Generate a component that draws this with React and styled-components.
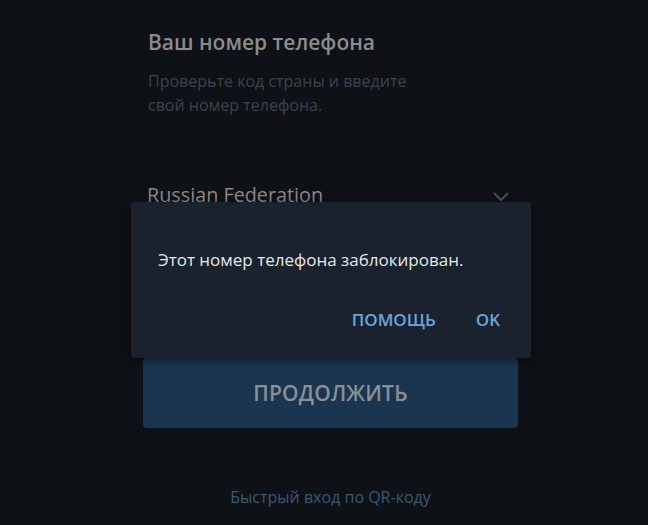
import React from "react";
import styled, { createGlobalStyle } from "styled-components";

const GlobalStyle = createGlobalStyle`
  html, body {
    margin: 0;
    padding: 0;
    background: #0e1116;
  }
  body {
    font-family: "Open Sans", "Noto Sans", sans-serif;
  }
`;

const Page = styled.div`
  position: relative;
  width: 648px;
  height: 525px;
  overflow: hidden;
  background: #0e1116;
`;

const Column = styled.div`
  width: 375px;
  margin-left: 143px;
  display: flex;
  flex-direction: column;
`;

const Title = styled.div`
  padding: 27px 0 0 5px;
  font-size: 21px;
  font-weight: 600;
  line-height: 30px;
  color: #8c8c8c;
`;

const Subtitle = styled.div`
  padding: 12px 0 0 5px;
  width: 290px;
  font-size: 16px;
  line-height: 24px;
  color: #3c434c;
`;

const CountryRow = styled.div`
  margin-top: 62px;
  display: flex;
  align-items: center;
  justify-content: space-between;
  padding: 0 8px 0 4px;
  height: 30px;
  font-size: 19.8px;
  color: #8a8a8a;
`;

const Chevron = styled.svg`
  width: 18px;
  height: 12px;
  margin-top: 6px;
`;

const PhoneRow = styled.div`
  margin-top: 20px;
  height: 129px;
  border-top: 1px solid #1d2530;
  box-sizing: border-box;
`;

const ContinueButton = styled.button`
  height: 70px;
  border: none;
  border-radius: 4px;
  background: #19354f;
  color: #8a9096;
  font-family: inherit;
  font-size: 21px;
  font-weight: 600;
  letter-spacing: 0.2px;
  cursor: pointer;
`;

const QrLink = styled.div`
  margin-top: 58px;
  text-align: center;
  font-size: 16px;
  line-height: 22px;
  color: #3b5875;
`;

const Dialog = styled.div`
  position: absolute;
  left: 131px;
  top: 202px;
  width: 400px;
  height: 156px;
  box-sizing: border-box;
  background: #1a222d;
  border-radius: 3px;
  box-shadow: 0 2px 10px rgba(0, 0, 0, 0.45);
  display: flex;
  flex-direction: column;
  padding: 46px 0 0 27px;
`;

const DialogText = styled.div`
  font-size: 17px;
  line-height: 24px;
  color: #e6e8ea;
`;

const DialogActions = styled.div`
  margin-top: 36px;
  display: flex;
  justify-content: flex-end;
  gap: 40px;
  padding-right: 31px;
`;

const DialogButton = styled.button`
  background: none;
  border: none;
  padding: 0;
  font-family: inherit;
  font-size: 17px;
  font-weight: 600;
  line-height: 24px;
  color: #6aa5de;
  cursor: pointer;
`;

export default function App() {
  return (
    <>
      <GlobalStyle />
      <Page>
        <Column>
          <Title>Ваш номер телефона</Title>
          <Subtitle>Проверьте код страны и введите свой номер телефона.</Subtitle>
          <CountryRow>
            <span>Russian Federation</span>
            <Chevron viewBox="0 0 18 12">
              <path d="M2 2l7 7 7-7" fill="none" stroke="#4a5058" strokeWidth="2" />
            </Chevron>
          </CountryRow>
          <PhoneRow />
          <ContinueButton>ПРОДОЛЖИТЬ</ContinueButton>
          <QrLink>Быстрый вход по QR-коду</QrLink>
        </Column>
        <Dialog>
          <DialogText>Этот номер телефона заблокирован.</DialogText>
          <DialogActions>
            <DialogButton>ПОМОЩЬ</DialogButton>
            <DialogButton>OK</DialogButton>
          </DialogActions>
        </Dialog>
      </Page>
    </>
  );
}
